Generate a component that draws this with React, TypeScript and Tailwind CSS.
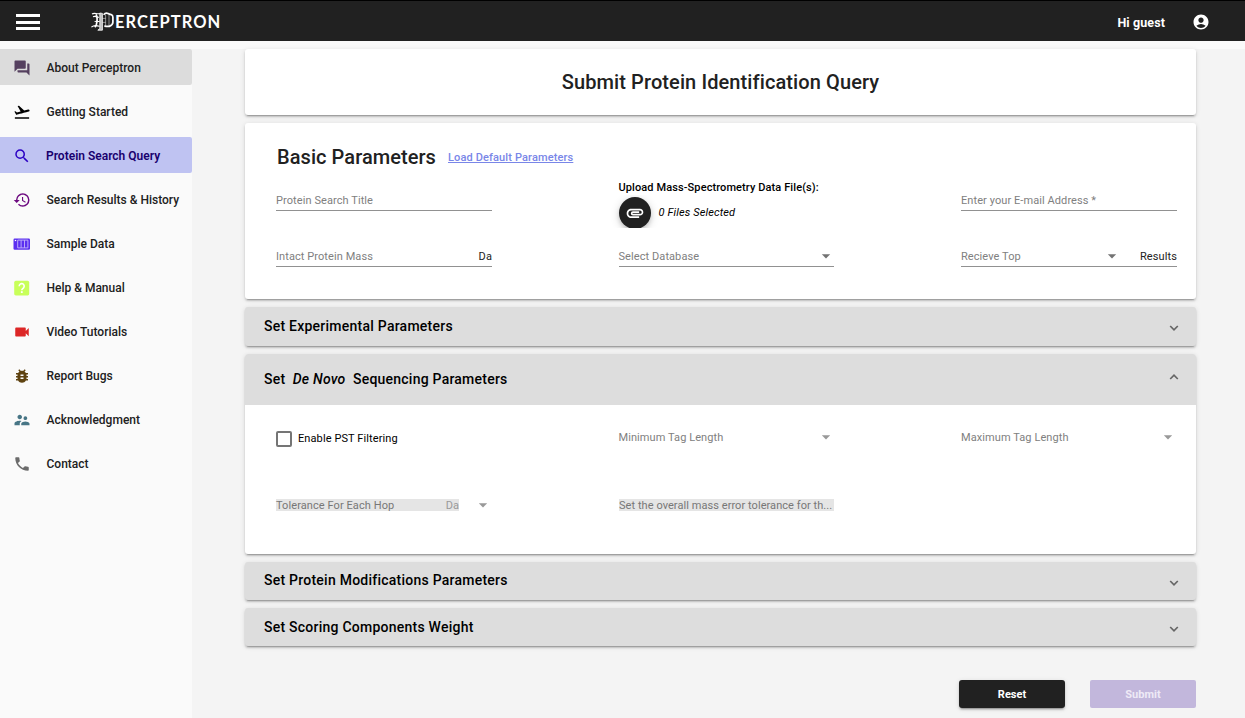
import React from "react";
import {
  MdQuestionAnswer, MdFlightTakeoff, MdSearch, MdHistory, MdVideocam, MdBugReport,
  MdSupervisorAccount, MdPhone, MdAccountCircle, MdAttachment, MdArrowDropDown,
} from "react-icons/md";

const card = "rounded-[3px] shadow-[0_3px_1px_-2px_rgba(0,0,0,0.2),0_2px_2px_0_rgba(0,0,0,0.14),0_1px_5px_0_rgba(0,0,0,0.12)]";

function SampleIcon() {
  return (
    <svg width="18" height="18" viewBox="0 0 18 18">
      <rect x="0.5" y="3.5" width="16.5" height="11.2" rx="1.2" fill="#5b2ff0" />
      <rect x="1.8" y="4.9" width="1.4" height="1.2" fill="#fff" />
      <path d="M4.7 5.1h10.2v7.8H4.7zM8.1 5.1v7.8M11.5 5.1v7.8" fill="none" stroke="#c4b6fa" strokeWidth="0.9" />
    </svg>
  );
}

function HelpIcon() {
  return (
    <svg width="18" height="18" viewBox="0 0 18 18">
      <rect x="1.2" y="1.8" width="15" height="14.6" rx="1.6" fill="#c8ff5a" />
      <path d="M6.2 7.2a2.5 2.5 0 1 1 4.3 1.7c-.9.8-1.7 1.2-1.7 2.3" fill="none" stroke="#fff" strokeWidth="1.6" />
      <rect x="7.9" y="12.2" width="1.8" height="1.8" fill="#fff" />
    </svg>
  );
}

const items: { label: string; icon: React.ReactNode; row?: string; text?: string }[] = [
  { label: "About Perceptron", icon: <MdQuestionAnswer size={18} color="#55405f" />, row: "bg-[#dcdcdc]" },
  { label: "Getting Started", icon: <MdFlightTakeoff size={18} color="#000" /> },
  { label: "Protein Search Query", icon: <MdSearch size={18} color="#2b00c4" />, row: "bg-[#bfc3f2]", text: "text-[#19006e] font-semibold -ml-[0.5px]" },
  { label: "Search Results & History", icon: <MdHistory size={18} color="#6d0a80" /> },
  { label: "Sample Data", icon: <SampleIcon /> },
  { label: "Help & Manual", icon: <HelpIcon /> },
  { label: "Video Tutorials", icon: <MdVideocam size={18} color="#dc2626" /> },
  { label: "Report Bugs", icon: <MdBugReport size={18} color="#5e4210" /> },
  { label: "Acknowledgment", icon: <MdSupervisorAccount size={18} color="#477585" /> },
  { label: "Contact", icon: <MdPhone size={18} color="#6b6b6b" /> },
];

function Logo() {
  return (
    <div className="flex h-6 items-center pl-[1px] pt-[2px]">
      <svg width="24" height="20" viewBox="0 0 24 20" fill="none" stroke="#fff">
        <path d="M1 2C3.6.2 6 2.6 9 1.4M2 4.8c2.6-1.4 3.6.8 6 .4M3.6 9.6c2-1.2 3 .4 5-.2M.4 15.2c3-2.8 5.4-1.8 8.2-.8" strokeWidth="1.1" />
        <path d="M4.8 2.4c2.2 2.4 1.4 10.8-1 12.8" strokeWidth="1.7" />
        <path d="M8.8 1v15.6l-2 1.6h4.6V1.4z" fill="#bbb" strokeWidth="0.8" />
        <path d="M12.6 2.8c1.4-1.6 2.8-2 4.4-1.2 1 .6 2 .8 3.2 1 1.3.4 1.7 1.4 1.7 2.6v5c0 2.4-1.7 3.4-3.6 4.2-1.8.2-3.2-.2-5-.2" strokeWidth="1.7" />
        <path d="M14.6 2.6v11.4M18 3v11M11.4 6.4h3.2M11.4 10.4h3.2" strokeWidth="0.7" opacity="0.7" />
      </svg>
      <span className="font-['Lato'] text-[16.5px] font-bold leading-6 tracking-[1.05px] text-white">ERCEPTRON</span>
    </div>
  );
}

function Chevron({ up = false }: { up?: boolean }) {
  return (
    <svg width="10" height="8" viewBox="0 0 10 8" fill="none" stroke="#666" strokeWidth="1.7">
      <path d={up ? "M1.2 6 5 2.2 8.8 6" : "M1.2 2 5 5.8 8.8 2"} />
    </svg>
  );
}

function Panel({ title, height, lift }: { title: string; height: string; lift?: boolean }) {
  return (
    <div className={`flex items-center justify-between bg-[#ddd] pl-[19px] pr-[17px] ${height} ${card}`}>
      <h3 className={`text-[14px] font-medium leading-5 tracking-[0.24px] text-black ${lift ? "pb-[2px]" : ""}`}>{title}</h3>
      <div className="pt-[3px]"><Chevron /></div>
    </div>
  );
}

function Field({ label, suffix, arrow, muted }: { label: string; suffix?: string; arrow?: boolean; muted?: boolean }) {
  return (
    <div className={`flex h-[21px] items-start border-b text-[11px] leading-[22px] text-[#808080] ${arrow && !suffix ? "mr-px w-[215px]" : "w-[216px]"} ${muted ? "border-transparent" : "border-[#919191]"}`}>
      <span className="grow whitespace-nowrap tracking-[0.08px]">{label}</span>
      {arrow && <MdArrowDropDown size={20} color={muted ? "#999" : "#737373"} className={suffix ? "mr-[18px]" : "-mr-[2px]"} />}
      {suffix && <span className="tracking-[0.1px] text-[#222]">{suffix}</span>}
    </div>
  );
}

export default function App() {
  return (
    <div className="flex h-[718px] w-[1245px] flex-col overflow-hidden bg-[#fafafa] font-['Roboto',sans-serif] text-[#212121]">
      <header className="flex h-[41px] shrink-0 items-center border-t border-black bg-[#212121] pl-4 pr-[35px]">
        <div className="flex w-6 flex-col gap-[3.5px] pt-[2px]">
          <div className="h-[3px] bg-white" />
          <div className="h-[3px] bg-white" />
          <div className="h-[3px] bg-white" />
        </div>
        <div className="ml-[50px] grow"><Logo /></div>
        <span className="mr-[27px] pt-[3px] text-[12.5px] font-bold leading-4 tracking-[0.1px] text-white">Hi guest</span>
        <MdAccountCircle size={18} color="#fff" className="mt-px" />
      </header>
      <div className="mt-2 flex grow">
        <nav className="flex w-48 shrink-0 flex-col gap-2">
          {items.map((it) => (
            <div key={it.label} className={`flex h-9 items-center rounded-r-[2px] pl-[12.5px] ${it.row ?? ""}`}>
              <div className="w-[34px] shrink-0 pt-[2px]">{it.icon}</div>
              <span className={`whitespace-nowrap pt-[2px] text-[12px] leading-5 ${it.text ?? "font-medium"}`}>{it.label}</span>
            </div>
          ))}
        </nav>
        <main className="flex grow flex-col bg-[#f4f4f4] pl-[53px] pr-[49px]">
          <section className={`flex h-[66px] items-center justify-center bg-white ${card}`}>
            <h1 className="text-[20px] font-medium leading-7 tracking-[0.1px]">Submit Protein Identification Query</h1>
          </section>

          <section className={`mt-2 h-44 bg-white pl-[31px] pr-[19px] pt-5 ${card}`}>
            <div className="flex items-center">
              <h2 className="pl-[1px] text-[20px] font-medium leading-7 tracking-[0.06px]">Basic Parameters</h2>
              <a className="ml-[12px] pt-[2px] text-[11px] font-medium leading-4 tracking-[0.13px] text-[#7986e8] underline">Load Default Parameters</a>
            </div>
            <div className="mt-[9px] flex justify-between">
              <div className="pt-[10px]"><Field label="Protein Search Title" /></div>
              <div className="h-[48px] w-[216px]">
                <div className="text-[11px] font-medium leading-[15px] tracking-[0.1px] text-black">Upload Mass-Spectrometry Data File(s):</div>
                <div className="-ml-2 flex h-[33px] items-start overflow-hidden pl-2 pt-[2px]">
                  <div className="flex size-8 shrink-0 items-center justify-center rounded-full bg-[#212121] shadow-[0_3px_5px_-1px_rgba(0,0,0,0.2),0_2px_10px_0_rgba(0,0,0,0.16)]">
                    <MdAttachment size={20} color="#fff" />
                  </div>
                  <span className="ml-2 pt-[6px] text-[11px] italic leading-5 tracking-[0.13px] text-black">0 Files Selected</span>
                </div>
              </div>
              <div className="pt-[10px]"><Field label="Enter your E-mail Address *" /></div>
            </div>
            <div className="mt-[18px] flex justify-between">
              <Field label="Intact Protein Mass" suffix="Da" />
              <Field label="Select Database" arrow />
              <Field label="Recieve Top" arrow suffix="Results" />
            </div>
          </section>

          <div className="mt-2"><Panel title="Set Experimental Parameters" height="h-[39px]" lift /></div>

          <section className={`mt-2 h-[200px] overflow-hidden bg-white ${card}`}>
            <div className="flex h-[51px] items-center justify-between bg-[#ddd] pl-[19px] pr-[17px]">
              <h3 className="whitespace-pre pb-[2px] text-[14px] font-medium leading-5 tracking-[0.23px] text-black">Set  <em>De Novo</em>  Sequencing Parameters</h3>
              <div className="pb-[5px]"><Chevron up /></div>
            </div>
            <div className="flex justify-between pl-[31px] pr-[19px] pt-[22px]">
              <label className="flex w-[216px] items-center pt-[2px]">
                <span className="size-4 rounded-[2px] border-2 border-[#757575]" />
                <span className="ml-[6px] text-[11px] leading-4 tracking-[0.1px] text-black">Enable PST Filtering</span>
              </label>
              <Field label="Minimum Tag Length" arrow muted />
              <Field label="Maximum Tag Length" arrow muted />
            </div>
            <div className="flex pl-[31px] pt-[51px]">
              <div className="flex w-[343px] items-center">
                <div className="flex h-3 w-[183px] justify-between bg-[#e5e5e5] text-[11px] leading-[13px] tracking-[0.08px] text-[#777]">
                  <span>Tolerance For Each Hop</span><span className="text-[#999]">Da</span>
                </div>
                <MdArrowDropDown size={20} color="#999" className="-my-2 ml-[14px]" />
              </div>
              <div className="h-3 w-[215px] whitespace-nowrap bg-[#e5e5e5] text-[11px] leading-[13px] tracking-[0.06px] text-[#777]">Set the overall mass error tolerance for th...</div>
            </div>
          </section>

          <div className="mt-2"><Panel title="Set Protein Modifications Parameters" height="h-[38px]" lift /></div>
          <div className="mt-2"><Panel title="Set Scoring Components Weight" height="h-[38px]" /></div>
          <div className="mt-[34px] flex justify-end gap-[25px]">
            <button className={`h-7 w-[106px] bg-[#212121] pt-[2px] text-[11px] font-bold text-white ${card}`}>Reset</button>
            <button className="h-7 w-[106px] rounded-[2px] bg-[#c2b7dc] pt-[2px] text-[11px] font-bold text-[#eeeaf6]">Submit</button>
          </div>
        </main>
      </div>
    </div>
  );
}
